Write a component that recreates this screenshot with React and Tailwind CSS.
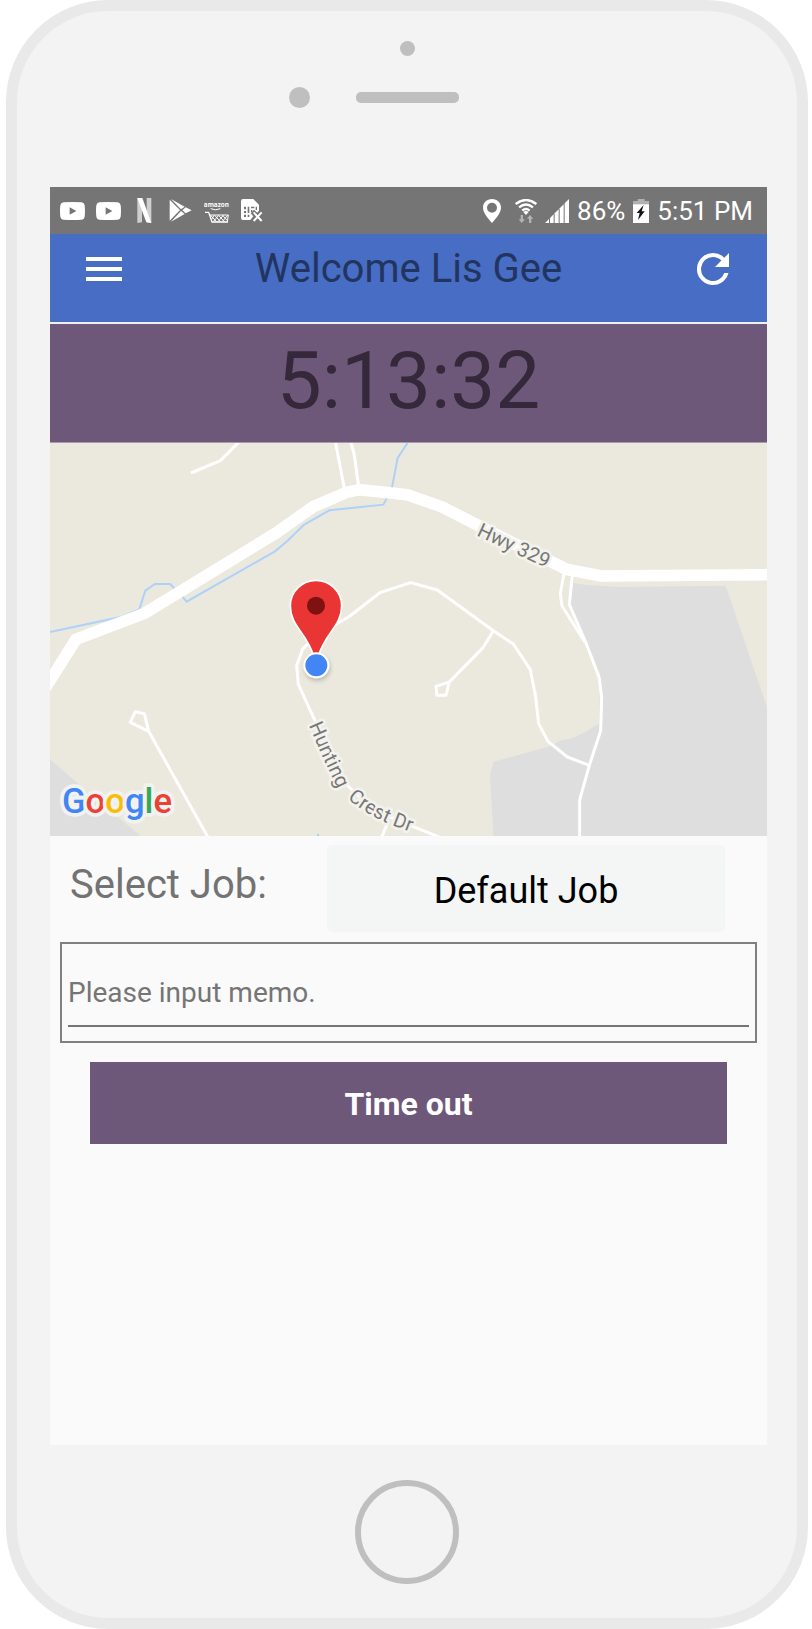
import { useState } from "react";

function YoutubeIcon() {
  return (
    <svg className="h-[18px] w-[25px]" viewBox="0 0 75 54" aria-label="YouTube">
      <path
        fill="#fff"
        fillRule="evenodd"
        d="M10 1Q37-1 65 1Q73 2 74 10Q76 27 74 44Q73 52 65 53Q37 55 10 53Q2 52 1 44Q-1 27 1 10Q2 2 10 1ZM29 16V38L49 27Z"
      />
    </svg>
  );
}

function NetflixIcon() {
  return (
    <svg className="h-[25px] w-[25px]" viewBox="0 0 75 75" aria-label="Netflix">
      <path fill="#cfcfcf" d="M16 0H30V73L16 75ZM44 0H58V75L44 73Z" />
      <path fill="#fff" d="M16 0H31L58 75L43 73Z" />
    </svg>
  );
}

function PlayStoreIcon() {
  return (
    <svg className="h-[25px] w-[25px]" viewBox="0 0 75 75" aria-label="Play Store">
      <g fill="#fff">
        <path d="M5 5L36 36L5 68Z" />
        <path d="M9 3L50 26L39 34Z" />
        <path d="M9 71L50 48L39 39Z" />
        <path d="M53 28L71 37L53 46L43 37Z" />
      </g>
    </svg>
  );
}

function AmazonIcon() {
  return (
    <svg className="h-[25px] w-[25px]" viewBox="0 0 75 75" aria-label="Amazon shopping">
      <text x="37" y="28" fill="#fff" textAnchor="middle" className="font-['Open_Sans',sans-serif] text-[19px] font-bold">
        amazon
      </text>
      <g fill="none" stroke="#fff">
        <path d="M20 32Q35 39 49 32" strokeWidth="3" />
        <path d="M3 43H14L24 72H72" strokeWidth="4" />
        <path d="M17 51H73L70 72" strokeWidth="3" />
        <path
          d="M20 52L38 72M32 52L50 72M44 52L62 72M56 52L71 69M30 52L23 64M44 52L28 71M58 52L42 71M71 52L55 71"
          strokeWidth="3"
        />
      </g>
    </svg>
  );
}

function SimErrorIcon() {
  return (
    <svg className="h-[25px] w-[25px]" viewBox="0 0 75 75" aria-label="No SIM card">
      <path fill="#fff" d="M9 3H40L57 20V38L52 44L42 35L32 46L40 55L31 66H9Q3 66 3 60V9Q3 3 9 3Z" />
      <path d="M12 26H18V34H12ZM12 39H18V45H12ZM12 50H18V57H12ZM23 26H28V45H23ZM23 50H28V57H23ZM33 26H43V31H33ZM33 36H37V42H33ZM47 26H51V36H47Z" fill="#757575" />
      <path d="M41 43L65 69M65 43L41 69" stroke="#fff" strokeWidth="6" />
    </svg>
  );
}

function LocationIcon() {
  return (
    <svg className="mr-[6px] h-6 w-[18px]" viewBox="0 0 54 72" aria-label="Location">
      <path
        fill="#fff"
        fillRule="evenodd"
        d="M27 0C43 0 54 12 54 26C54 43 35 62 27 72C19 62 0 43 0 26C0 12 11 0 27 0ZM27 11A15 15 0 1 0 27 41A15 15 0 1 0 27 11Z"
      />
    </svg>
  );
}

function WifiIcon() {
  return (
    <svg className="h-6 w-[22px]" viewBox="0 0 66 72" aria-label="Wi-Fi">
      <g fill="none" stroke="#fff" strokeWidth="7">
        <path d="M2 15Q33-9 64 15" />
        <path d="M12 25Q33 8 54 25" />
        <path d="M22 35Q33 25 44 35" />
      </g>
      <path fill="#fff" d="M25 39Q33 33 41 39L33 48Z" />
      <path fill="#b3b3b3" d="M17 48H24V61H30L20 72L11 61H17ZM42 72V59H36L45 48L55 59H49V72Z" />
    </svg>
  );
}

function SignalIcon() {
  return (
    <svg className="h-6 w-6" viewBox="0 0 72 72" aria-label="Mobile signal">
      <g fill="#fff">
        <path d="M0 72L12 60V72Z" />
        <path d="M15 72V57L26 46V72Z" />
        <path d="M29 72V43L41 31V72Z" />
        <path d="M44 72V28L56 16V72Z" />
        <path d="M59 72V13L72 0V72Z" />
      </g>
    </svg>
  );
}

function BatteryIcon() {
  return (
    <svg className="h-6 w-4" viewBox="0 0 48 72" aria-label="Battery charging">
      <path fill="#b0b0b0" d="M14 0H35V6H48V18H0V6H14Z" />
      <path fill="#fff" d="M0 16H48V72H0Z" />
      <path fill="#111" d="M32 18L11 42H20L15 63L35 37H26Z" />
    </svg>
  );
}

function StatusBar() {
  return (
    <div className="flex h-[47px] items-center justify-between bg-[#757575] pr-[14px] pl-[10px] text-[26px] leading-none text-white">
      <div className="flex items-center gap-[11px]">
        <YoutubeIcon />
        <YoutubeIcon />
        <NetflixIcon />
        <PlayStoreIcon />
        <AmazonIcon />
        <SimErrorIcon />
      </div>
      <div className="flex items-center gap-2">
        <LocationIcon />
        <WifiIcon />
        <SignalIcon />
        <span>86%</span>
        <BatteryIcon />
        <span>5:51 PM</span>
      </div>
    </div>
  );
}

function Header() {
  return (
    <header className="flex h-[90px] items-start justify-between border-b-2 border-[#eef0f6] bg-[#486dc5] pr-[30px] pl-9">
      <button type="button" aria-label="Open menu" className="flex h-[70px] w-[42px] flex-col justify-center gap-[6px]">
        <span className="h-1 w-9 bg-white" />
        <span className="h-1 w-9 bg-white" />
        <span className="h-1 w-9 bg-white" />
      </button>
      <h1 className="text-[40px] leading-[70px] text-[#21355f]">Welcome Lis Gee</h1>
      <button type="button" aria-label="Refresh" className="flex h-[70px] w-12 items-center justify-center">
        <svg className="size-12" viewBox="0 0 24 24" fill="#fff">
          <path d="M17.65 6.35A7.96 7.96 0 0 0 12 4a8 8 0 1 0 7.73 10h-2.08A6 6 0 1 1 12 6c1.66 0 3.14.69 4.22 1.78L13 11h7V4z" />
        </svg>
      </button>
    </header>
  );
}

function JobMap() {
  return (
    <svg className="block w-full" viewBox="30 9 2151 1179" role="img" aria-label="Map of the current location">
      <defs>
        <path id="streetUpper" d="M806 856L850 956L900 1060" />
        <path id="streetLower" d="M922 1075Q975 1122 1050 1153L1180 1202" />
        <filter id="dotShadow" x="-50%" y="-50%" width="200%" height="200%">
          <feDropShadow dx="3" dy="8" stdDeviation="6" floodOpacity="0.2" />
        </filter>
      </defs>
      <rect x="30" y="9" width="2151" height="1179" fill="#ebe9de" />
      <g fill="#dedede">
        <path d="M30 958L195 1100L303 1188H30Z" />
        <path d="M1598 429L1640 435L1740 441L2057 437L2181 801V1188H1360L1350 1004L1361 965L1530 919L1565 900L1590 896L1629 880L1678 850L1680 700L1590 490Z" />
      </g>
      <g fill="none" stroke="#aed1fa" strokeWidth="6">
        <path d="M30 576L245 530L298 508L316 452L345 432H391L402 444L427 470L440 485L705 334L742 303L791 255L868 211L1030 194L1042 172L1056 142L1073 54L1105 5" />
        <path d="M834 1182V1190" />
      </g>
      <g fill="none" stroke="#fff" strokeWidth="9" strokeLinejoin="round">
        <path d="M453 99L541 62L598 5" />
        <path d="M886 5L913 145" />
        <path d="M932 5L943 45L956 140" />
        <path d="M503 1190L326 874L313 821L286 815L271 847L326 874" />
        <path d="M1200 1192L1120 1160L1000 1110L905 1020L826 844L775 733L770 677L788 627L825 590L880 557L930 528L1020 458L1112 428L1192 450L1360 572L1420 612L1471 689L1486 765L1496 851L1524 904L1582 951L1648 976" />
        <path d="M1360 572L1330 622L1228 726L1188 739L1191 766H1218L1228 726" />
        <path d="M1026 1190L1042 1150" />
        <path d="M1572 400L1561 461L1566 498L1636 608" />
        <path d="M1597 405L1588 493L1640 614L1678 714L1685 773L1682 872L1648 976L1619 1080V1190" />
      </g>
      <path
        d="M16 744L108 598L314 520L708 279L820 200L918 158L958 149L1102 164L1207 201L1400 300L1580 388L1683 408L2190 404"
        fill="none"
        stroke="#fff"
        strokeWidth="35"
      />
      <g
        className="font-['Roboto',sans-serif] text-[60px]"
        fill="#777"
        stroke="#f3f2ec"
        strokeWidth="16"
        strokeLinejoin="round"
        paintOrder="stroke"
      >
        <text transform="translate(1308 286) rotate(25)">Hwy 329</text>
        <text>
          <textPath href="#streetUpper">Hunting</textPath>
        </text>
        <text>
          <textPath href="#streetLower">Crest Dr</textPath>
        </text>
      </g>
      <path
        d="M828 421C869 421 905 454 905 497C905 541 880 563 861 594C848 616 838 630 836 650H820C818 630 808 616 795 594C776 563 751 541 751 497C751 454 787 421 828 421Z"
        fill="#ea3535"
        stroke="#fff"
        strokeWidth="5"
      />
      <circle cx="828" cy="497" r="27" fill="#801111" />
      <circle cx="829" cy="676" r="36" fill="#4286f5" stroke="#fff" strokeWidth="6" filter="url(#dotShadow)" />
      <text
        x="66"
        y="1118"
        className="font-['Roboto',sans-serif] text-[104px] font-medium"
        stroke="#f2f2f0"
        strokeWidth="22"
        strokeLinejoin="round"
        paintOrder="stroke"
      >
        <tspan fill="#4285f4">G</tspan>
        <tspan fill="#ea4335">o</tspan>
        <tspan fill="#fbbc05">o</tspan>
        <tspan fill="#4285f4">g</tspan>
        <tspan fill="#34a853">l</tspan>
        <tspan fill="#ea4335">e</tspan>
      </text>
    </svg>
  );
}

function JobForm() {
  const [memo, setMemo] = useState("");
  return (
    <form className="flex flex-col px-[10px] pt-[9px]" onSubmit={(e) => e.preventDefault()}>
      <div className="flex items-start justify-between pr-8 pl-[10px]">
        <label htmlFor="job" className="text-[40px] leading-[80px] text-[#737373]">
          Select Job:
        </label>
        <select
          id="job"
          className="h-[87px] w-[398px] appearance-none rounded-[5px] bg-[#f4f6f5] pt-1 text-center text-[36px] text-black [text-align-last:center]"
        >
          <option>Default Job</option>
        </select>
      </div>
      <div className="mt-[10px] h-[101px] border-2 border-[#808080] px-[6px] pt-[15px]">
        <input
          type="text"
          aria-label="Memo"
          placeholder="Please input memo."
          value={memo}
          onChange={(e) => setMemo(e.target.value)}
          className="h-[68px] w-full border-b-2 border-[#757575] text-[28px] text-[#333] outline-none placeholder:text-[#757575]"
        />
      </div>
      <button type="submit" className="mx-[30px] mt-[19px] h-[82px] bg-[#6d587a] pt-[2px] text-[32px] font-bold text-white">
        Time out
      </button>
    </form>
  );
}

export default function App() {
  return (
    <div className="bg-white pr-1 pl-[6px] font-['Roboto',sans-serif]">
      <div className="flex flex-col items-center rounded-[102px] border-[11px] border-[#e9e9e9] bg-[#f3f3f3] pt-[30px] pb-[34px]">
        <div className="size-[15px] rounded-full bg-[#bfbfbf]" />
        <div className="mt-[31px] grid w-full grid-cols-[1fr_auto_1fr] items-center">
          <div className="mr-[46px] size-[21px] justify-self-end rounded-full bg-[#bfbfbf]" />
          <div className="h-[11px] w-[103px] rounded-[5px] bg-[#bfbfbf]" />
        </div>
        <main className="mt-[79px] flex min-h-[1258px] w-full flex-col pr-[30px] pl-[33px]">
          <div className="flex grow flex-col bg-[#fafafa]">
            <StatusBar />
            <Header />
            <div className="flex h-[119px] items-center justify-center border-b border-[#a79baf] bg-[#6d587a] pb-1 text-[80px] leading-none text-[#35283a]">
              <time>5:13:32</time>
            </div>
            <JobMap />
            <JobForm />
          </div>
        </main>
        <button type="button" aria-label="Home" className="mt-[35px] size-[104px] rounded-full border-[6px] border-[#bfbfbf]" />
      </div>
    </div>
  );
}
